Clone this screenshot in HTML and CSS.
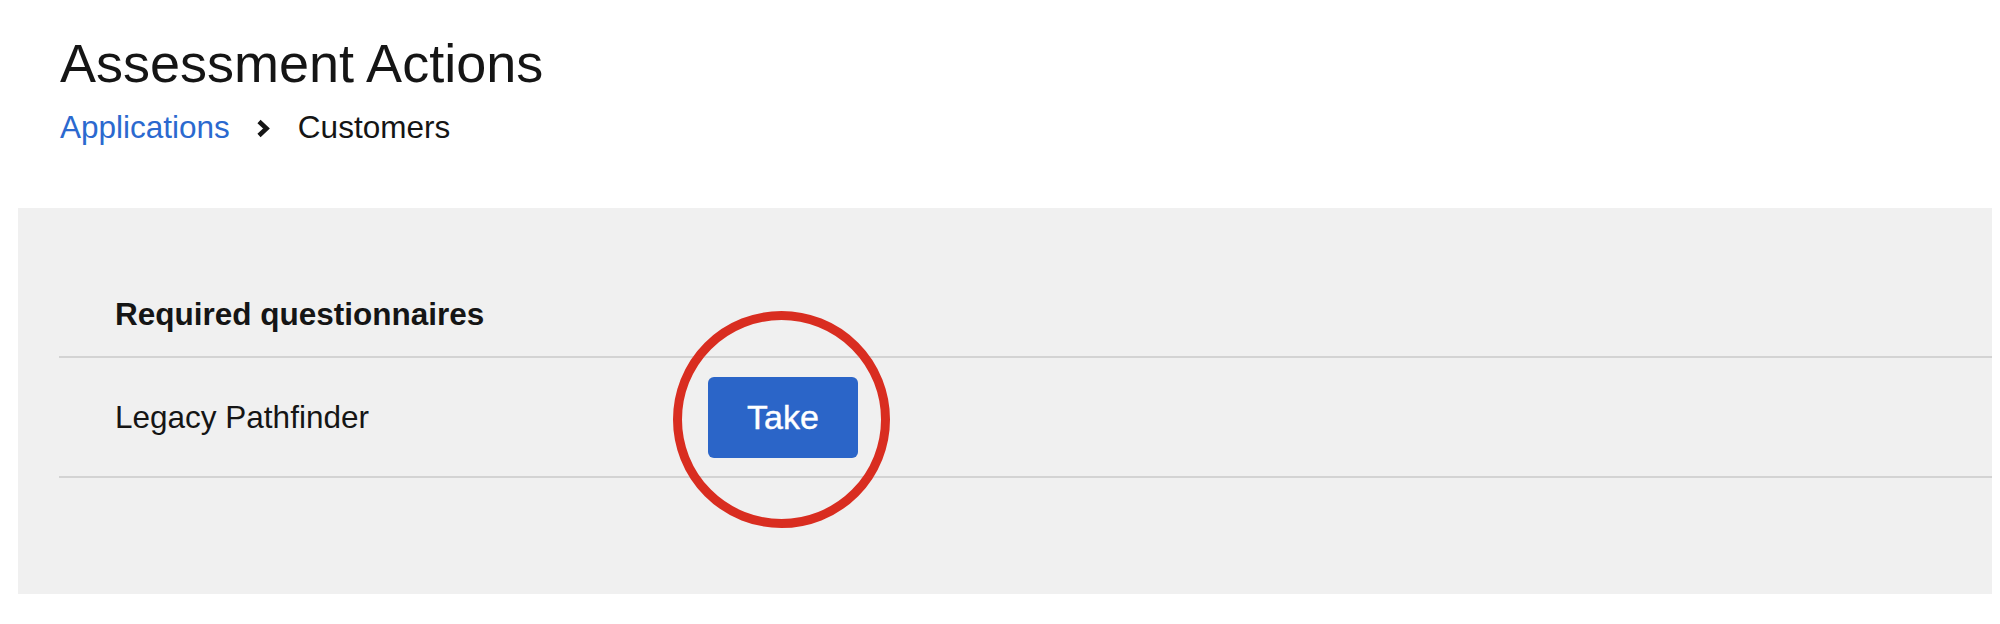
FILE: index.html
```html
<!DOCTYPE html>
<html lang="en">
<head>
<meta charset="utf-8">
<title>Assessment Actions</title>
<link rel="stylesheet" href="styles.css">
</head>
<body>
<header class="page-header">
  <h1 class="title">Assessment Actions</h1>
  <nav class="breadcrumb">
    <a class="crumb-link" href="#">Applications</a>
    <svg class="crumb-sep" width="15" height="19" viewBox="0 0 15 19" aria-hidden="true"><path d="M3 2.5 L10.5 9.5 L3 16.5" fill="none" stroke="#151515" stroke-width="4.6" stroke-linejoin="miter" stroke-linecap="butt"/></svg>
    <span class="crumb-current">Customers</span>
  </nav>
</header>
<main class="panel">
  <div class="table">
    <div class="row head-row">
      <div class="cell name-cell head-cell">Required questionnaires</div>
    </div>
    <div class="row body-row">
      <div class="cell name-cell">Legacy Pathfinder</div>
      <div class="cell action-cell">
        <div class="btn-wrap">
          <button class="btn-take" type="button">Take</button>
          <span class="highlight-ring"></span>
        </div>
      </div>
    </div>
  </div>
</main>
</body>
</html>
```
FILE: styles.css
```css
html, body {
  margin: 0;
  padding: 0;
  background: #ffffff;
}
body {
  font-family: "Liberation Sans", Arial, Helvetica, sans-serif;
  color: #151515;
  width: 2000px;
  height: 624px;
  overflow: hidden;
}
.page-header {
  padding: 31px 0 0 60px;
}
.title {
  margin: 0;
  font-size: 54px;
  font-weight: 400;
  line-height: 65px;
  color: #151515;
}
.breadcrumb {
  margin-top: 7px;
  display: flex;
  align-items: center;
  font-size: 31.5px;
  line-height: 48px;
  height: 48px;
}
.crumb-link {
  color: #2b69cf;
  text-decoration: none;
}
.crumb-sep {
  margin: 2px 27px 0 26px;
  display: block;
}
.crumb-current {
  color: #151515;
}
.panel {
  margin: 57px 8px 0 18px;
  background: #f0f0f0;
  height: 386px;
  box-sizing: border-box;
  padding: 60px 0 0 41px;
}
.table {
  display: flex;
  flex-direction: column;
}
.row {
  display: flex;
  align-items: center;
  border-bottom: 2px solid #d3d3d3;
}
.cell {
  font-size: 31.5px;
  line-height: 48px;
}
.name-cell {
  width: 649px;
  box-sizing: border-box;
  padding-left: 56px;
}
.head-cell {
  font-weight: 700;
  padding-top: 22px;
  padding-bottom: 18px;
}
.body-row {
  height: 120px;
  box-sizing: border-box;
}
.action-cell {
  display: flex;
}
.btn-wrap {
  position: relative;
  width: 150px;
  height: 81px;
}
.btn-take {
  width: 150px;
  height: 81px;
  border: none;
  border-radius: 6px;
  background: #2b65c8;
  color: #ffffff;
  font-family: "Liberation Sans", Arial, Helvetica, sans-serif;
  font-size: 34px;
  padding: 0;
  margin: 0;
  line-height: 81px;
  -webkit-text-stroke: 0.4px #ffffff;
}
.highlight-ring {
  position: absolute;
  left: -35px;
  top: -66px;
  width: 217px;
  height: 217px;
  box-sizing: border-box;
  border: 9.5px solid #d92d20;
  border-radius: 50%;
  pointer-events: none;
}
```
